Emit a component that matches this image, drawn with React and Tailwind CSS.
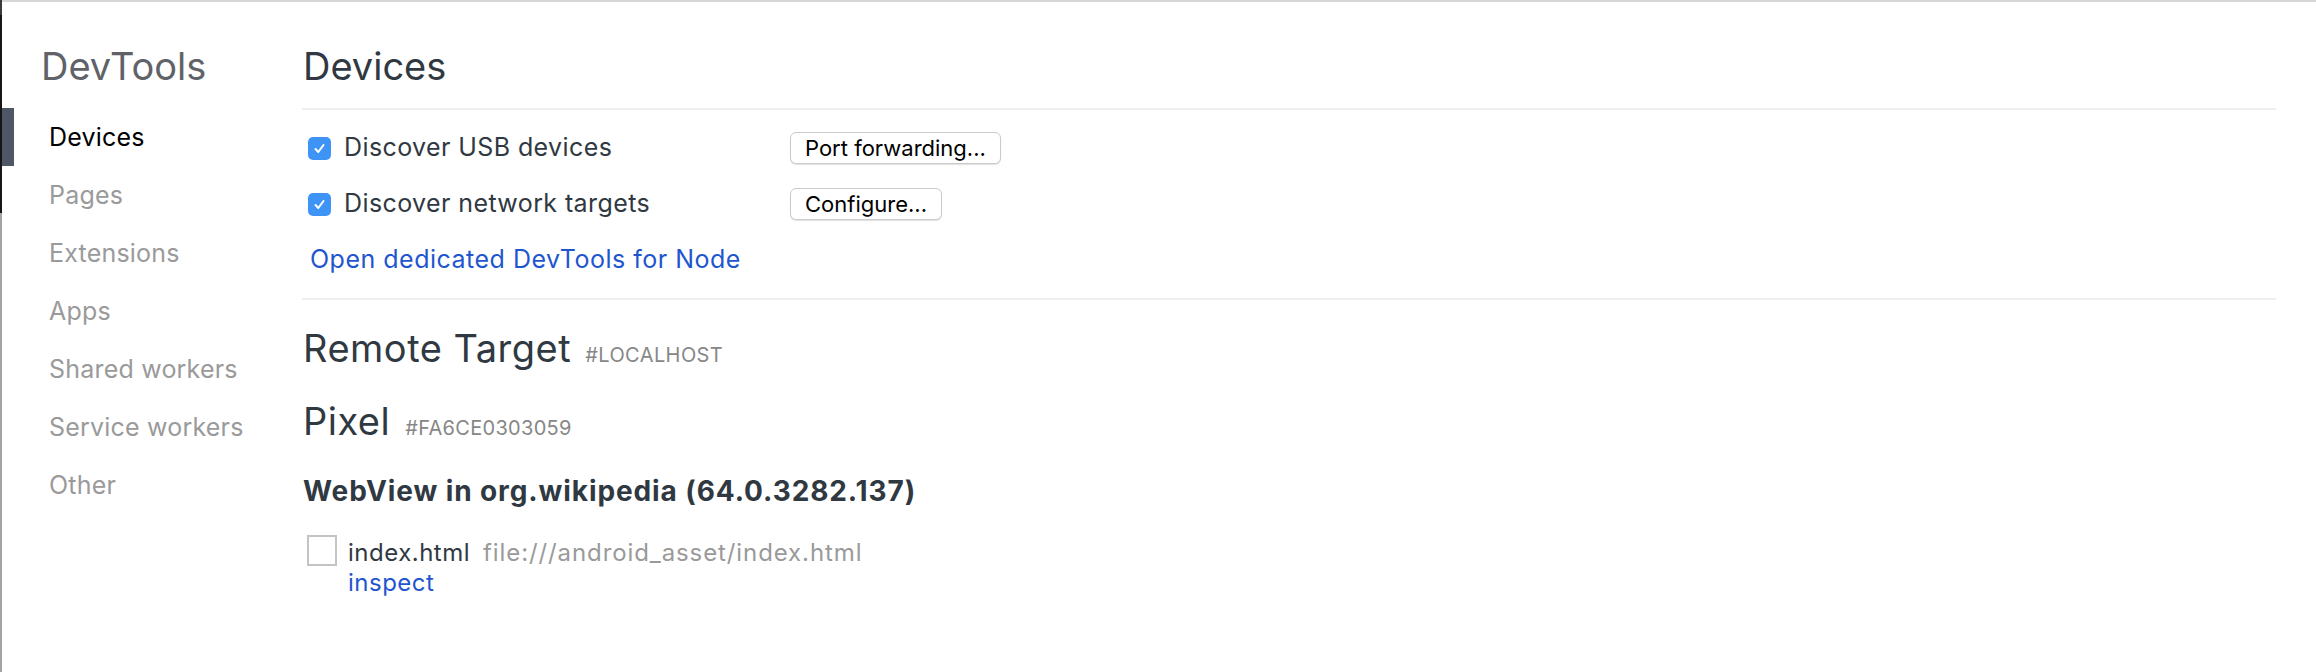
import React from 'react';

const font = { fontFamily: 'Inter, "Liberation Sans", sans-serif' };

const navItems = ['Devices', 'Pages', 'Extensions', 'Apps', 'Shared workers', 'Service workers', 'Other'];

function CheckedBox() {
  return (
    <span className="flex h-[23px] w-[23px] shrink-0 items-center justify-center rounded-[5px] bg-[#3d94f6]">
      <svg width="13" height="13" viewBox="0 0 13 13" fill="none">
        <path d="M2.5 7l2.8 3L10.5 3" stroke="white" strokeWidth="2" strokeLinecap="round" strokeLinejoin="round" />
      </svg>
    </span>
  );
}

function OptionRow({ label, button }) {
  return (
    <div className="flex h-[56px] items-center">
      <div className="flex w-[488px] items-center gap-[13px] pl-[6px]">
        <CheckedBox />
        <span className="text-[25px] tracking-[0.4px] text-[#303942]">{label}</span>
      </div>
      <button className="flex h-[32px] items-center rounded-[6px] border border-[#cbcbcb] bg-white px-[14px] text-[22px] text-black shadow-[0_1px_1px_rgba(0,0,0,0.12)]">
        {button}
      </button>
    </div>
  );
}

export default function App() {
  return (
    <div className="flex h-[672px] w-full overflow-hidden bg-white" style={font}>
      {/* left window edge */}
      <div className="flex w-[2px] shrink-0 flex-col">
        <div className="h-[15px] bg-[#3a3a3a]" />
        <div className="h-[198px] bg-[#161616]" />
        <div className="flex-1 bg-[#a3a3a3]" />
      </div>

      <div className="flex flex-1 flex-col border-t-2 border-[#d6d6d6]">
        <div className="flex flex-1">
          {/* Sidebar */}
          <div className="w-[300px] shrink-0">
            <div className="h-[106px] pl-[39px] pt-[41px] text-[38px] leading-[46px] text-[#5f6368]">DevTools</div>
            <ul>
              {navItems.map((item, i) => (
                <li
                  key={item}
                  className={
                    i === 0
                      ? 'h-[58px] border-l-[12px] border-[#4f5666] pl-[35px] text-[25px] leading-[58px] tracking-[0.2px] text-black'
                      : 'h-[58px] border-l-[12px] border-transparent pl-[35px] text-[25px] leading-[58px] tracking-[0.2px] text-[#9a9a9a]'
                  }
                >
                  {item}
                </li>
              ))}
            </ul>
          </div>

          {/* Main */}
          <div className="flex-1 pr-[40px]">
            <div className="h-[106px] pl-[1px] pt-[41px] text-[38px] leading-[46px] text-[#303942]">Devices</div>
            <div className="h-[2px] bg-[#eeeeee]" />

            <div className="pb-[10px] pt-[10px]">
              <OptionRow label="Discover USB devices" button="Port forwarding..." />
              <OptionRow label="Discover network targets" button="Configure..." />
              <div className="flex h-[56px] items-center pl-[8px]">
                <a className="text-[25px] tracking-[0.5px] text-[#1f56cf]">Open dedicated DevTools for Node</a>
              </div>
            </div>
            <div className="h-[2px] bg-[#eeeeee]" />

            <div className="mt-[25px] h-[46px] pl-[1px] text-[38px] leading-[46px] tracking-[0.5px] text-[#303942]">
              Remote Target
              <span className="ml-[14px] text-[20px] leading-none tracking-[0.4px] text-[#878787]">#LOCALHOST</span>
            </div>
            <div className="mt-[27px] h-[46px] pl-[1px] text-[38px] leading-[46px] tracking-[0.5px] text-[#303942]">
              Pixel
              <span className="ml-[15px] text-[20px] leading-none tracking-[0.3px] text-[#878787]">#FA6CE0303059</span>
            </div>
            <div className="mt-[31px] h-[33px] pl-[1px] text-[28px] font-bold leading-[33px] tracking-[0.9px] text-[#303942]">
              WebView in org.wikipedia (64.0.3282.137)
            </div>

            <div className="mt-[30px] flex gap-[11px] pl-[5px]">
              <span className="mt-[-3px] h-[31px] w-[30px] shrink-0 border-2 border-[#c4c4c4] bg-white" />
              <div className="text-[24px] leading-[30px] tracking-[0.5px]">
                <div>
                  <span className="text-[#303942]">index.html</span>
                  <span className="ml-[13px] tracking-[0.9px] text-[#9a9a9a]">file:///android_asset/index.html</span>
                </div>
                <a className="text-[#1f56cf]">inspect</a>
              </div>
            </div>
          </div>
        </div>
      </div>
    </div>
  );
}
